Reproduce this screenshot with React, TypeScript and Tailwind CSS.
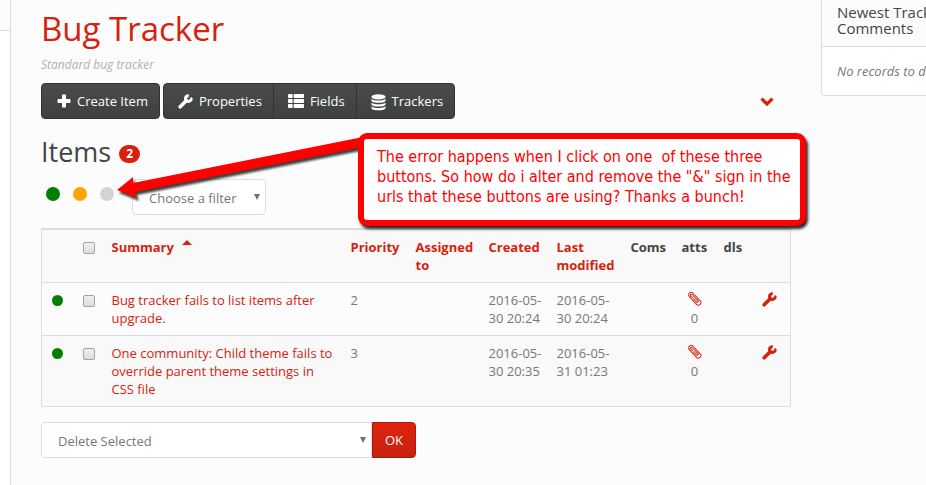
import type { ReactNode } from 'react';
import { FaThList } from 'react-icons/fa';

interface BugItem {
  readonly id: number;
  readonly summary: string;
  readonly priority: number;
  readonly created: string;
  readonly modified: string;
  readonly attachments: number;
}

const ITEMS: readonly BugItem[] = [
  {
    id: 1,
    summary: 'Bug tracker fails to list items after upgrade.',
    priority: 2,
    created: '2016-05-30 20:24',
    modified: '2016-05-30 20:24',
    attachments: 0,
  },
  {
    id: 2,
    summary: 'One community: Child theme fails to override parent theme settings in CSS file',
    priority: 3,
    created: '2016-05-30 20:35',
    modified: '2016-05-31 01:23',
    attachments: 0,
  },
];

const STATUSES = [
  { label: 'Open', color: 'bg-[#008000]' },
  { label: 'Pending', color: 'bg-[#ffa500]' },
  { label: 'Closed', color: 'bg-[#d3d3d3]' },
] as const;

function PlusIcon() {
  return (
    <svg viewBox="0 0 14 14" className="mb-[2px] h-[14px] w-[14px]" fill="currentColor" aria-hidden="true">
      <path d="M5 1.2q0-.7.7-.7h2.6q.7 0 .7.7V5h3.800q.7 0 .7.7v2.600q0 .7-.7.7H9v3.800q0 .7-.7.7H5.700q-.7 0-.7-.7V9H1.200q-.7 0-.7-.7V5.700q0-.7.7-.7H5z" />
    </svg>
  );
}

function WrenchIcon() {
  return (
    <svg
      viewBox="0 0 15 15"
      className="mb-px h-[15px] w-[15px]"
      fill="none"
      stroke="currentColor"
      strokeLinecap="round"
      aria-hidden="true"
    >
      <path d="M8.4 6.6 2.200 12.8" strokeWidth="3.6" />
      <path d="M10.800 1.700A2.900 2.900 0 1 0 13.300 4.700" strokeWidth="3" strokeLinecap="butt" />
      <path d="M13.300 4.300 13.200 5" strokeWidth="2.200" />
    </svg>
  );
}

function DatabaseIcon() {
  return (
    <svg viewBox="0 0 16 18" className="h-[17px] w-[15px]" fill="currentColor" aria-hidden="true">
      <ellipse cx="8" cy="3" rx="7.5" ry="2.8" />
      <path d="M.5 4.6c1 3 14 3 15 0v2.2c0 3.4-15 3.4-15 0z" />
      <path d="M.5 8.6c1 3 14 3 15 0v2.2c0 3.4-15 3.4-15 0z" />
      <path d="M.5 12.6c1 3 14 3 15 0v2.2c0 3.4-15 3.4-15 0z" />
    </svg>
  );
}

function PaperclipIcon() {
  return (
    <svg
      viewBox="0 0 14 14"
      className="mx-auto h-[14px] w-[14px]"
      fill="none"
      stroke="currentColor"
      strokeWidth="1"
      strokeLinecap="round"
      aria-hidden="true"
    >
      <path
        transform="rotate(47 7 7)"
        d="M2.500 9.500H12a2.500 2.500 0 0 0 0-5H1.500a2.500 2.500 0 0 0 0 5H1.800M4 7.900H1.800a.95.95 0 0 1 0-1.900H10.500a1 1 0 0 1 0 1.900H6"
      />
    </svg>
  );
}

function ToolbarButton({ icon, className, children }: { icon: ReactNode; className: string; children: ReactNode }) {
  return (
    <button
      type="button"
      className={`flex h-9 items-center gap-[6px] border border-[#303231] bg-linear-to-b from-[#4a4c4b] to-[#3f4140] pt-[2px] pr-[11px] text-[13px] text-white ${className}`}
    >
      {icon}
      {children}
    </button>
  );
}

function SelectArrow() {
  return (
    <svg viewBox="0 0 6 6" className="pointer-events-none absolute top-[15px] right-[6px] h-[6px] w-[6px]" aria-hidden="true">
      <path d="M0 0h6L3 6z" fill="#707070" />
    </svg>
  );
}

function Checkbox({ label }: { label: string }) {
  return (
    <input
      type="checkbox"
      aria-label={label}
      className="mt-1 block h-3 w-3 appearance-none rounded-[2px] border border-[#a3a3a3] bg-linear-to-b from-[#f0f0f0] to-[#dcdcdc] checked:bg-[#d8210d]"
    />
  );
}

function ItemsTable() {
  return (
    <table className="w-full table-fixed border-collapse border border-t-2 border-[#dddddd] text-left leading-[18px]">
      <colgroup>
        <col className="w-[33px]" />
        <col className="w-[29px]" />
        <col />
        <col className="w-[65px]" />
        <col className="w-[73px]" />
        <col className="w-[68px]" />
        <col className="w-[74px]" />
        <col className="w-[51px]" />
        <col className="w-[42px]" />
        <col className="w-[33px]" />
        <col className="w-[42px]" />
      </colgroup>
      <thead>
        <tr className="bg-[#f9f9f9] align-top font-bold text-[#444444] [&>th]:py-2 [&>th]:pr-1 [&>th]:pl-2">
          <th />
          <th>
            <Checkbox label="Select all items" />
          </th>
          <th>
            <a href="#summary" className="flex gap-[8px] text-[#d8210d]">
              Summary
              <svg viewBox="0 0 10 5" className="mt-[2px] h-[5px] w-[10px]" aria-hidden="true">
                <path d="M0 5 5 0l5 5z" fill="currentColor" />
              </svg>
            </a>
          </th>
          <th>
            <a href="#priority" className="text-[#d8210d]">Priority</a>
          </th>
          <th>
            <a href="#assigned" className="text-[#d8210d]">Assigned to</a>
          </th>
          <th>
            <a href="#created" className="text-[#d8210d]">Created</a>
          </th>
          <th>
            <a href="#modified" className="text-[#d8210d]">Last modified</a>
          </th>
          <th>Coms</th>
          <th>atts</th>
          <th>dls</th>
          <th />
        </tr>
      </thead>
      <tbody>
        {ITEMS.map((item) => (
          <tr
            key={item.id}
            className="border-t border-[#dddddd] align-top even:bg-[#f9f9f9] [&>td]:py-2 [&>td]:pr-1 [&>td]:pl-2"
          >
            <td>
              <span className="mt-1 ml-[2px] block h-[11px] w-[11px] rounded-full bg-[#008000]" />
            </td>
            <td>
              <Checkbox label={`Select item ${item.id}`} />
            </td>
            <td>
              <a href={`#item-${item.id}`} className="text-[#d8210d]">{item.summary}</a>
            </td>
            <td>{item.priority}</td>
            <td />
            <td>{item.created}</td>
            <td>{item.modified}</td>
            <td />
            <td className="pr-2! text-center">
              <a href={`#attachments-${item.id}`} aria-label="Attachments" className="flex h-[18px] pt-px text-[#d8210d]">
                <PaperclipIcon />
              </a>
              {item.attachments}
            </td>
            <td />
            <td>
              <a href={`#edit-${item.id}`} aria-label="Edit item" className="ml-[5px] block pt-px text-[#d8210d]">
                <WrenchIcon />
              </a>
            </td>
          </tr>
        ))}
      </tbody>
    </table>
  );
}

// Note and arrow laid over the page
function Annotation() {
  return (
    <>
      <svg
        viewBox="0 0 260 80"
        className="pointer-events-none absolute top-[130px] left-[94px] h-[80px] w-[260px] drop-shadow-[2px_3px_1px_rgba(0,0,0,0.75)]"
        aria-hidden="true"
      >
        <path d="M12 60 28 47v6L258 7v10L30 62l2 6z" fill="#ff0000" />
      </svg>
      <div className="absolute top-[133px] left-[347px] w-[448px] rounded-[9px] border-6 border-[#ff0000] bg-white px-[13px] pt-2 pb-[13px] font-['DejaVu_Sans_Condensed','DejaVu_Sans',sans-serif] text-[16px] leading-5 whitespace-pre text-[#ff0000] shadow-[2px_3px_3px_rgba(0,0,0,0.85)]">
        <p>The error happens when I click on one  of these three</p>
        <p>buttons. So how do i alter and remove the "&amp;" sign in the</p>
        <p>urls that these buttons are using? Thanks a bunch!</p>
      </div>
    </>
  );
}

export default function App() {
  return (
    <div className="flex min-h-screen overflow-hidden bg-[#fcfcfc] font-['Open_Sans',sans-serif] text-[13px] text-[#777777]">
      <div className="flex w-[11px] shrink-0 flex-col border-r border-[#dddddd]">
        <div className="h-[31px] border-b border-[#dddddd]" />
        <div className="flex-1 bg-white" />
      </div>

      <main className="relative min-w-0 flex-1 px-[30px] pt-2">
        <h1 className="text-[33px] leading-[42px] text-[#d8210d]">Bug Tracker</h1>
        <p className="mt-[5px] text-[12px] leading-[20px] text-[#b0b0b0] italic">Standard bug tracker</p>

        <div className="mt-2 flex items-center justify-between">
          <div className="flex gap-[3px]">
            <ToolbarButton icon={<PlusIcon />} className="rounded-[4px] pl-[15px]">
              Create Item
            </ToolbarButton>
            <div className="flex">
              <ToolbarButton icon={<WrenchIcon />} className="rounded-l-[4px] pl-[14px]">
                Properties
              </ToolbarButton>
              <ToolbarButton icon={<FaThList className="mb-[2px] h-4 w-4" />} className="-ml-px pl-[14px]">
                Fields
              </ToolbarButton>
              <ToolbarButton icon={<DatabaseIcon />} className="-ml-px rounded-r-[4px] pl-[14px]">
                Trackers
              </ToolbarButton>
            </div>
          </div>
          <button type="button" aria-label="Expand" className="mr-[17px] text-[#d8210d]">
            <svg viewBox="0 0 14 9" className="h-[9px] w-[14px]" fill="none" aria-hidden="true">
              <path d="M1.500 1.700 7 7l5.500-5.300" stroke="currentColor" strokeWidth="3.200" />
            </svg>
          </button>
        </div>

        <div className="mt-4 flex items-center gap-2">
          <h2 className="text-[27px] leading-[34px] text-[#444444]">Items</h2>
          <span className="mt-1 flex h-[18px] w-[21px] items-center justify-center rounded-full bg-[#d8210d] text-[12px] font-bold text-white">
            2
          </span>
        </div>

        <div className="mt-[10px] flex">
          <div className="mt-2 ml-[5px] flex gap-[13px]">
            {STATUSES.map((status) => (
              <button
                key={status.label}
                type="button"
                aria-label={status.label}
                className={`h-[14px] w-[14px] rounded-full ${status.color}`}
              />
            ))}
          </div>
          <div className="relative ml-[18px]">
            <select
              aria-label="Filter"
              className="h-9 w-[134px] appearance-none rounded-[4px] border border-[#dddddd] bg-white px-4 pt-[3px] text-[13px] text-[#777777]"
            >
              <option>Choose a filter</option>
            </select>
            <SelectArrow />
          </div>
        </div>

        <div className="mt-[13px]">
          <ItemsTable />
        </div>

        <div className="mt-[15px] flex">
          <div className="relative">
            <select
              aria-label="Bulk action"
              className="h-9 w-[331px] appearance-none rounded-l-[4px] border border-[#dddddd] bg-white px-4 pt-[3px] text-[13px] text-[#777777]"
            >
              <option>Delete Selected</option>
            </select>
            <SelectArrow />
          </div>
          <button
            type="button"
            className="h-9 w-11 rounded-r-[4px] border border-[#b01a0a] bg-linear-to-b from-[#de2410] to-[#c8200e] pt-[2px] text-[13px] text-white"
          >
            OK
          </button>
        </div>

        <Annotation />
      </main>

      <aside className="w-[105px] shrink-0">
        <section className="w-[220px] rounded-b-[4px] border border-t-0 border-[#dddddd] bg-white">
          <h3 className="border-b border-[#dddddd] bg-[#fcfcfc] px-[15px] pt-1 pb-[10px] text-[15px] leading-4 text-[#444444]">
            Newest Tracker
            <br />
            Comments
          </h3>
          <p className="px-[15px] py-[15px] leading-[18px] italic">No records to display</p>
        </section>
      </aside>
    </div>
  );
}
